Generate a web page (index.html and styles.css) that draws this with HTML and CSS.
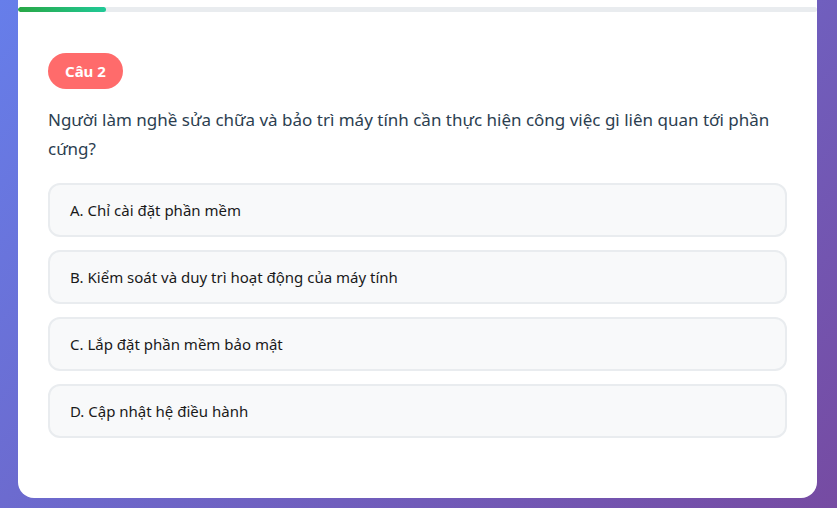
FILE: index.html
```html
<!DOCTYPE html>
<html lang="vi">
<head>
    <meta charset="UTF-8">
    <meta name="viewport" content="width=device-width, initial-scale=1.0">
    <title>Câu hỏi trắc nghiệm</title>
    <link rel="stylesheet" href="styles.css">
</head>
<body>
    <main class="quiz-card">
        <div class="progress"><div class="progress-fill" style="width: 11%"></div></div>
        <section class="question-box">
            <span class="badge">Câu 2</span>
            <p class="question">Người làm nghề sửa chữa và bảo trì máy tính cần thực hiện công việc gì liên quan tới phần cứng?</p>
            <div class="options">
                <button class="option">A. Chỉ cài đặt phần mềm</button>
                <button class="option">B. Kiểm soát và duy trì hoạt động của máy tính</button>
                <button class="option">C. Lắp đặt phần mềm bảo mật</button>
                <button class="option">D. Cập nhật hệ điều hành</button>
            </div>
        </section>
    </main>
</body>
</html>
```

FILE: styles.css
```css
/* Estilos generales */
* {
    margin: 0;
    padding: 0;
    box-sizing: border-box;
    font-family: 'Noto Sans', 'Open Sans', sans-serif;
}

html, body {
    height: 100%;
}

body {
    background: linear-gradient(135deg, #667eea 0%, #764ba2 100%);
    padding: 0 20px 10px 18px;
    overflow: hidden;
}

.quiz-card {
    background-color: #ffffff;
    border-radius: 0 0 16px 16px;
    padding-top: 7px;
    height: 100%;
}

.progress {
    height: 5px;
    background-color: #e9ecef;
    border-radius: 3px;
    overflow: hidden;
}

.progress-fill {
    height: 100%;
    border-radius: 3px;
    background: linear-gradient(90deg, #28a745, #20c997);
}

.question-box {
    padding: 41px 30px 30px;
}

.badge {
    display: inline-block;
    background-color: #ff6b6b;
    color: #ffffff;
    font-weight: 700;
    font-size: 15px;
    line-height: 36px;
    height: 36px;
    padding: 0 17px;
    border-radius: 18px;
}

.question {
    margin-top: 16px;
    font-size: 17px;
    line-height: 29px;
    color: #2c3e50;
}

.options {
    display: grid;
    gap: 13px;
    margin-top: 20px;
}

.option {
    display: block;
    width: 100%;
    height: 54px;
    text-align: left;
    background-color: #f8f9fa;
    border: 2px solid #e9ecef;
    border-radius: 12px;
    padding: 0 20px;
    font-size: 15px;
    color: #1a1a1a;
    cursor: pointer;
}
```
